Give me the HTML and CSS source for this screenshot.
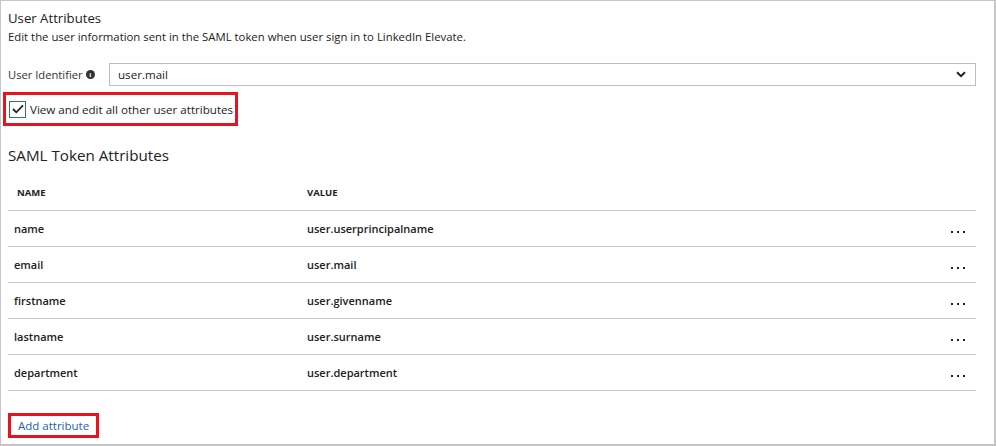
FILE: index.html
```html
<!DOCTYPE html>
<html>
<head>
<meta charset="utf-8">
<link rel="stylesheet" href="styles.css">
</head>
<body>
<div class="panel">
  <div class="title">User Attributes</div>
  <div class="desc">Edit the user information sent in the SAML token when user sign in to LinkedIn Elevate.</div>
  <div class="ident">
    <div class="ident-label">User Identifier <span class="info">i</span></div>
    <div class="select">
      <span>user.mail</span>
      <svg class="chev" width="10" height="7" viewBox="0 0 10 7"><path d="M1 1.2 L5 5.2 L9 1.2" fill="none" stroke="#222" stroke-width="2"/></svg>
    </div>
  </div>
  <div class="check-row">
    <div class="check-box">
      <svg width="12" height="10" viewBox="0 0 12 10"><path d="M1 5 L4.3 8.3 L11 1.3" fill="none" stroke="#222" stroke-width="1.8"/></svg>
    </div>
    <span class="check-label">View and edit all other user attributes</span>
  </div>
  <div class="subtitle">SAML Token Attributes</div>
  <div class="table">
    <div class="thead">
      <div class="c-name">NAME</div>
      <div class="c-val">VALUE</div>
    </div>
    <div class="row"><div class="c-name">name</div><div class="c-val">user.userprincipalname</div><div class="more"><i></i><i></i><i></i></div></div>
    <div class="row"><div class="c-name">email</div><div class="c-val">user.mail</div><div class="more"><i></i><i></i><i></i></div></div>
    <div class="row"><div class="c-name">firstname</div><div class="c-val">user.givenname</div><div class="more"><i></i><i></i><i></i></div></div>
    <div class="row"><div class="c-name">lastname</div><div class="c-val">user.surname</div><div class="more"><i></i><i></i><i></i></div></div>
    <div class="row"><div class="c-name">department</div><div class="c-val">user.department</div><div class="more"><i></i><i></i><i></i></div></div>
  </div>
  <div class="add-wrap"><span class="add">Add attribute</span></div>
</div>
</body>
</html>
```
FILE: styles.css
```css
html, body {
  margin: 0;
  padding: 0;
  background: #fff;
}
body {
  font-family: "Open Sans", "Noto Sans", Arial, sans-serif;
  color: #222;
  width: 996px;
  height: 446px;
  overflow: hidden;
}
.panel {
  box-sizing: border-box;
  width: 996px;
  height: 446px;
  border-top: 1px solid #c6c6c6;
  border-left: 1px solid #c6c6c6;
  border-right: 2px solid #c6c6c6;
  border-bottom: 2px solid #c6c6c6;
  padding: 7px 18px 0 7px;
}
.title {
  font-size: 13.2px;
  line-height: 20px;
  color: #222;
}
.desc {
  font-size: 11.35px;
  line-height: 17px;
  color: #222;
}
.ident {
  display: flex;
  align-items: center;
  margin-top: 18px;
  height: 23px;
}
.ident-label {
  width: 101px;
  font-size: 11.2px;
  color: #333;
  display: flex;
  align-items: center;
  white-space: nowrap;
}
.info {
  display: inline-flex;
  align-items: center;
  justify-content: center;
  width: 9px;
  height: 9px;
  border-radius: 50%;
  background: #333;
  color: #fff;
  font-size: 7px;
  font-weight: bold;
  margin-left: 3px;
  font-family: "Liberation Serif", serif;
}
.select {
  flex: 1;
  box-sizing: border-box;
  height: 23px;
  border: 1px solid #bdbdbd;
  display: flex;
  align-items: center;
  justify-content: space-between;
  padding: 0 9px 0 8px;
  font-size: 11.6px;
  color: #222;
}
.chev {
  display: block;
}
.check-row {
  display: inline-flex;
  align-items: center;
  box-sizing: border-box;
  margin: 6px 0 0 -5px;
  height: 34px;
  width: 235px;
  border: 3px solid #e8131c;
  padding-left: 3px;
}
.check-box {
  box-sizing: border-box;
  width: 17px;
  height: 17px;
  border: 1px solid #2a6cb4;
  display: flex;
  align-items: center;
  justify-content: center;
}
.check-label {
  margin-left: 4px;
  font-size: 11.6px;
  color: #222;
  white-space: nowrap;
}
.subtitle {
  font-size: 15.2px;
  line-height: 20px;
  margin-top: 19px;
  color: #222;
}
.table {
  margin-top: 10px;
}
.thead {
  display: flex;
  align-items: center;
  height: 35px;
  border-bottom: 1px solid #c8c8c8;
  font-size: 9.5px;
  font-weight: bold;
  color: #222;
}
.thead .c-name {
  width: 299px;
  padding-left: 9px;
  box-sizing: border-box;
}
.row {
  display: flex;
  align-items: center;
  height: 35px;
  border-bottom: 1px solid #c8c8c8;
  font-size: 11px;
  color: #222;
}
.row .c-name {
  width: 299px;
  padding-left: 6px;
  box-sizing: border-box;
  font-weight: 600;
}
.row .c-val {
  flex: 1;
  font-weight: 600;
}
.more {
  display: flex;
  gap: 4px;
  margin-right: 11px;
  padding-top: 6px;
}
.more i {
  display: block;
  width: 2px;
  height: 2px;
  background: #222;
}
.add-wrap {
  margin-top: 22px;
}
.add {
  display: inline-block;
  box-sizing: border-box;
  height: 25px;
  line-height: 19px;
  border: 3px solid #e8131c;
  padding: 0 7px;
  font-size: 11.5px;
  color: #1a62b0;
}
```
